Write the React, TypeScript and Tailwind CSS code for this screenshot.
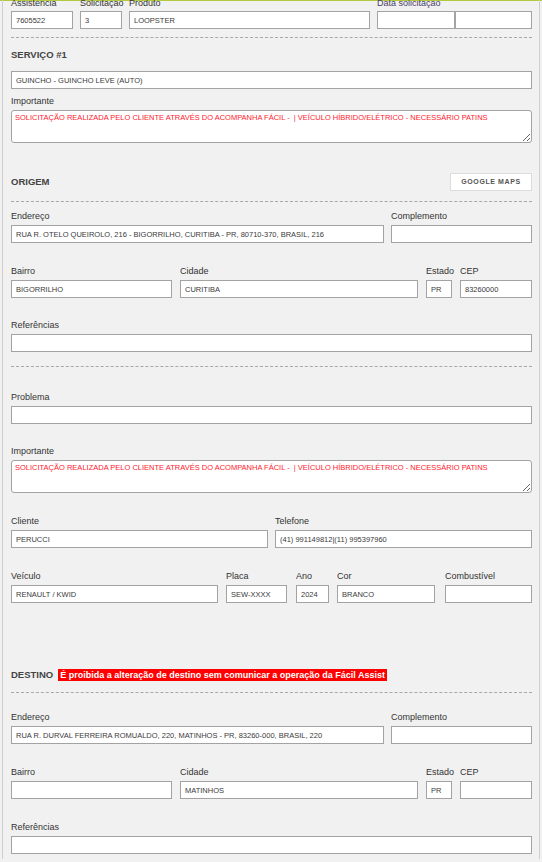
import React from "react";

const F = "'Liberation Sans', Arial, sans-serif";

function Label({ children, className = "" }: { children: React.ReactNode; className?: string }) {
  return (
    <div className={"h-[12px] leading-[12px] text-[9px] text-[#333] whitespace-nowrap mb-[3px] " + className}>
      {children}
    </div>
  );
}

function Input({ value = "", className = "" }: { value?: string; className?: string }) {
  return (
    <input
      readOnly
      value={value}
      className={
        "block h-[18px] w-full bg-white border border-[#a3a3a3] px-[4px] text-[7.5px] text-[#3a3a3a] outline-none " +
        className
      }
      style={{ fontFamily: F }}
    />
  );
}

function Field({ label, value, className = "" }: { label: string; value?: string; className?: string }) {
  return (
    <div className={"flex flex-col min-w-0 " + className}>
      <Label>{label}</Label>
      <Input value={value} />
    </div>
  );
}

function Area({ value }: { value: string }) {
  return (
    <textarea
      readOnly
      value={value}
      className="block h-[33px] w-full bg-white border border-[#a3a3a3] rounded-[3px] px-[3px] py-[2px] text-[7.5px] leading-[10px] text-[#ff1a2e] outline-none"
      style={{ fontFamily: F }}
    />
  );
}

function Dashed({ className = "" }: { className?: string }) {
  return <div className={"border-t border-dashed border-[#a8a8a8] " + className} />;
}

function Heading({ children }: { children: React.ReactNode }) {
  return <div className="h-[12px] leading-[12px] text-[9.5px] font-bold text-[#444]">{children}</div>;
}

const IMP =
  "SOLICITAÇÃO REALIZADA PELO CLIENTE ATRAVÉS DO ACOMPANHA FÁCIL -  | VEÍCULO HÍBRIDO/ELÉTRICO - NECESSÁRIO PATINS";

export default function App() {
  return (
    <div className="w-[542px] h-[862px] overflow-hidden bg-[#f1f1f1]" style={{ fontFamily: F }}>
      <div className="h-[1px] bg-[#b3c93f]" />
      <div className="ml-[2px] w-[538px] h-[861px] border-l border-r border-[#cfcfcf] pl-[8px] pr-[7px]">
        {/* top row */}
        <div className="flex mt-[-3px]">
          <div className="w-[62px]">
            <div className="h-[11px] leading-[11px] text-[9px] text-[#333] mb-[2px]">Assistencia</div>
            <Input value="7605522" />
          </div>
          <div className="w-[42px] ml-[7px]">
            <div className="h-[11px] leading-[11px] text-[9px] text-[#333] mb-[2px]">Solicitaçao</div>
            <Input value="3" />
          </div>
          <div className="w-[241px] ml-[7px]">
            <div className="h-[11px] leading-[11px] text-[9px] text-[#333] mb-[2px]">Produto</div>
            <Input value="LOOPSTER" />
          </div>
          <div className="ml-[7px] flex-1 min-w-0">
            <div className="h-[11px] leading-[11px] text-[9px] text-[#4b3f6b] mb-[2px] whitespace-nowrap">Data solicitaçao</div>
            <div className="flex">
              <div className="w-[78px] shrink-0">
                <Input />
              </div>
              <div className="flex-1 min-w-0">
                <Input />
              </div>
            </div>
          </div>
        </div>
        <Dashed className="mt-[8px]" />

        {/* servico */}
        <div className="mt-[11px]">
          <Heading>SERVIÇO #1</Heading>
        </div>
        <div className="mt-[10px]">
          <Input value="GUINCHO - GUINCHO LEVE (AUTO)" />
        </div>
        <div className="mt-[6px]">
          <Label>Importante</Label>
          <Area value={IMP} />
        </div>

        {/* origem */}
        <div className="mt-[30px] flex items-center justify-between h-[18px]">
          <Heading>ORIGEM</Heading>
          <div className="w-[82px] h-[18px] bg-white border border-[#dcdcdc] flex items-center justify-center text-[7px] font-bold tracking-[0.6px] text-[#555]">
            GOOGLE MAPS
          </div>
        </div>
        <Dashed className="mt-[10px]" />

        <div className="mt-[8px] flex gap-[7px]">
          <Field className="w-[373px]" label="Endereço" value="RUA R. OTELO QUEIROLO, 216 - BIGORRILHO, CURITIBA - PR, 80710-370, BRASIL, 216" />
          <Field className="flex-1" label="Complemento" />
        </div>
        <div className="mt-[22px] flex">
          <Field className="w-[161px]" label="Bairro" value="BIGORRILHO" />
          <Field className="w-[238px] ml-[8px]" label="Cidade" value="CURITIBA" />
          <Field className="w-[26px] ml-[8px]" label="Estado" value="PR" />
          <Field className="flex-1 ml-[8px]" label="CEP" value="83260000" />
        </div>
        <div className="mt-[21px]">
          <Field label="Referências" />
        </div>
        <Dashed className="mt-[14px]" />

        <div className="mt-[24px]">
          <Field label="Problema" />
        </div>
        <div className="mt-[21px]">
          <Label>Importante</Label>
          <Area value={IMP} />
        </div>
        <div className="mt-[22px] flex">
          <Field className="w-[257px]" label="Cliente" value="PERUCCI" />
          <Field className="flex-1 ml-[7px]" label="Telefone" value="(41) 991149812|(11) 995397960" />
        </div>
        <div className="mt-[22px] flex">
          <Field className="w-[207px]" label="Veículo" value="RENAULT / KWID" />
          <Field className="w-[61px] ml-[8px]" label="Placa" value="SEW-XXXX" />
          <Field className="w-[33px] ml-[9px]" label="Ano" value="2024" />
          <Field className="w-[98px] ml-[8px]" label="Cor" value="BRANCO" />
          <Field className="flex-1 ml-[10px]" label="Combustível" />
        </div>

        {/* destino */}
        <div className="mt-[66px] flex items-center h-[12px]">
          <Heading>DESTINO</Heading>
          <div className="ml-[5px] h-[12px] leading-[12px] bg-[#ff0000] px-[2px] text-[9px] font-bold text-white whitespace-nowrap">
            É proibida a alteração de destino sem comunicar a operação da Fácil Assist
          </div>
        </div>
        <Dashed className="mt-[11px]" />

        <div className="mt-[18px] flex gap-[7px]">
          <Field className="w-[373px]" label="Endereço" value="RUA R. DURVAL FERREIRA ROMUALDO, 220, MATINHOS - PR, 83260-000, BRASIL, 220" />
          <Field className="flex-1" label="Complemento" />
        </div>
        <div className="mt-[22px] flex">
          <Field className="w-[161px]" label="Bairro" />
          <Field className="w-[238px] ml-[8px]" label="Cidade" value="MATINHOS" />
          <Field className="w-[26px] ml-[8px]" label="Estado" value="PR" />
          <Field className="flex-1 ml-[8px]" label="CEP" />
        </div>
        <div className="mt-[22px]">
          <Field label="Referências" />
        </div>
      </div>
    </div>
  );
}
